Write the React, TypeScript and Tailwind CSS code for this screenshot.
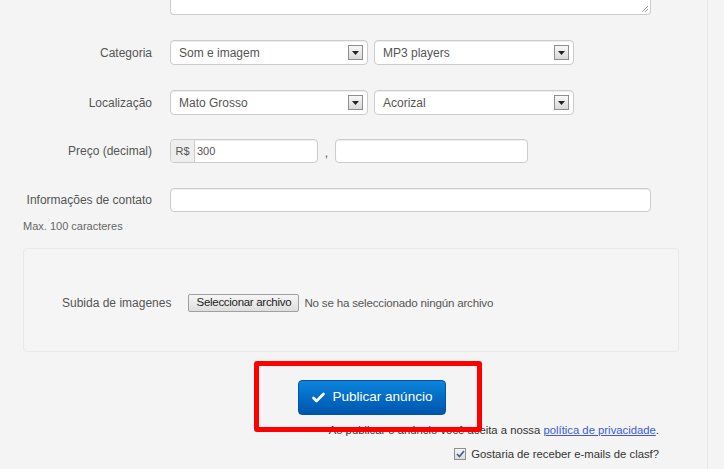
import React from "react";

function SelectBox({ value, width }: { value: string; width: string }) {
  return (
    <div
      className={`${width} h-[25px] flex items-center justify-between bg-white border border-[#cccccc] rounded-[4px] shadow-[inset_0_1px_1px_rgba(0,0,0,0.075)] pl-[8px] pr-[4px]`}
    >
      <span className="text-[12px] text-[#555]">{value}</span>
      <span className="w-[15px] h-[15px] flex items-center justify-center border border-[#8e8e8e] bg-gradient-to-b from-[#f7f7f7] to-[#d9d9d9]">
        <svg width="7" height="4" viewBox="0 0 7 4">
          <path d="M0 0h7L3.5 4z" fill="#222" />
        </svg>
      </span>
    </div>
  );
}

function TextInput({ width, children }: { width: string; children?: React.ReactNode }) {
  return (
    <div
      className={`${width} h-[24px] flex items-center bg-white border border-[#cccccc] rounded-[4px] shadow-[inset_0_1px_1px_rgba(0,0,0,0.075)]`}
    >
      {children}
    </div>
  );
}

function Label({ children }: { children: React.ReactNode }) {
  return <div className="w-[152px] text-right text-[12px] text-[#555] shrink-0">{children}</div>;
}

export default function App() {
  return (
    <div className="min-h-screen bg-[#f4f4f4] flex font-['Liberation_Sans',Arial,sans-serif] text-[12px] text-[#555]">
      <div className="w-[707px] relative">
        {/* Textarea (cut off at top) */}
        <div className="ml-[170px] w-[481px] h-[15px] bg-white border border-t-0 border-[#cccccc] rounded-b-[4px] relative">
          <svg className="absolute right-[1px] bottom-[1px]" width="8" height="8" viewBox="0 0 8 8">
            <path d="M7 1L1 7M7 4L4 7" stroke="#9a9a9a" strokeWidth="1" />
          </svg>
        </div>

        {/* Categoria */}
        <div className="mt-[25px] flex items-center h-[25px]">
          <Label>Categoria</Label>
          <div className="ml-[18px] flex gap-[6px]">
            <SelectBox value="Som e imagem" width="w-[198px]" />
            <SelectBox value="MP3 players" width="w-[200px]" />
          </div>
        </div>

        {/* Localização */}
        <div className="mt-[25px] flex items-center h-[25px]">
          <Label>Localização</Label>
          <div className="ml-[18px] flex gap-[6px]">
            <SelectBox value="Mato Grosso" width="w-[198px]" />
            <SelectBox value="Acorizal" width="w-[200px]" />
          </div>
        </div>

        {/* Preço */}
        <div className="mt-[24px] flex items-center h-[24px]">
          <Label>Preço (decimal)</Label>
          <div className="ml-[18px] flex items-center">
            <TextInput width="w-[148px]">
              <span className="h-full w-[24px] flex items-center justify-center bg-[#eeeeee] border-r border-[#cccccc] rounded-l-[4px] text-[11px] text-[#555]">
                R$
              </span>
              <span className="pl-[2px] text-[11px] text-[#555]">300</span>
            </TextInput>
            <span className="w-[17px] pt-[4px] text-center text-[12px] text-[#555]">,</span>
            <TextInput width="w-[193px]" />
          </div>
        </div>

        {/* Informações de contato */}
        <div className="mt-[25px] flex items-center h-[24px]">
          <Label>Informações de contato</Label>
          <div className="ml-[18px]">
            <TextInput width="w-[481px]" />
          </div>
        </div>
        <div className="mt-[8px] ml-[23px] text-[11px] leading-[13px] text-[#666]">Max. 100 caracteres</div>

        {/* Upload well */}
        <div className="mt-[15px] ml-[23px] w-[656px] h-[104px] bg-[#f5f5f5] border border-[#e9e9e9] rounded-[4px] flex items-center pl-[38px] pt-[5px]">
          <span className="text-[12px] text-[#555]">Subida de imagenes</span>
          <span className="ml-[17px] w-[111px] h-[18px] flex items-center justify-center border border-[#a0a0a0] rounded-[2px] bg-gradient-to-b from-[#f6f6f6] to-[#dedede] text-[11.5px] text-[#222] tracking-[-0.3px]">
            Seleccionar archivo
          </span>
          <span className="ml-[5px] text-[11.6px] text-[#555] tracking-[-0.2px]">No se ha seleccionado ningún archivo</span>
        </div>

        {/* Submit */}
        <div className="mt-[28px] ml-[298px] w-[148px] h-[35px] rounded-[4px] bg-gradient-to-b from-[#0d84dc] to-[#0055ad] border border-[#0054a8] flex items-center justify-center gap-[8px] text-white text-[13.5px]">
          <svg width="13" height="11" viewBox="0 0 13 11">
            <path d="M1.5 6l3 3L11.5 2" stroke="#fff" strokeWidth="2.6" fill="none" strokeLinecap="round" strokeLinejoin="round" />
          </svg>
          <span>Publicar anúncio</span>
        </div>

        <div className="mt-[8px] pr-[48px] text-right text-[11.3px] leading-[14px] text-[#333]">
          Ao publicar o anúncio você aceita a nossa{" "}
          <a href="#" className="text-[#3b5bdb] underline">
            política de privacidade
          </a>
          .
        </div>

        <div className="mt-[9px] pr-[48px] flex items-center justify-end gap-[5px] text-[11.3px] text-[#333]">
          <span className="w-[12px] h-[12px] border border-[#8f8f8f] bg-gradient-to-b from-[#f4f4f4] to-[#dcdcdc] flex items-center justify-center">
            <svg width="9" height="8" viewBox="0 0 9 8">
              <path d="M1 4l2.5 2.5L8 1" stroke="#4a5a8a" strokeWidth="1.6" fill="none" />
            </svg>
          </span>
          <span>Gostaria de receber e-mails de clasf?</span>
        </div>

        {/* Red annotation box */}
        <div className="absolute left-[254px] top-[361px] w-[228px] h-[71px] border-[5px] border-[#ff0000] rounded-[3px] pointer-events-none" />
      </div>
      <div className="w-px bg-[#e9e9e9]" />
      <div className="flex-1" />
    </div>
  );
}
